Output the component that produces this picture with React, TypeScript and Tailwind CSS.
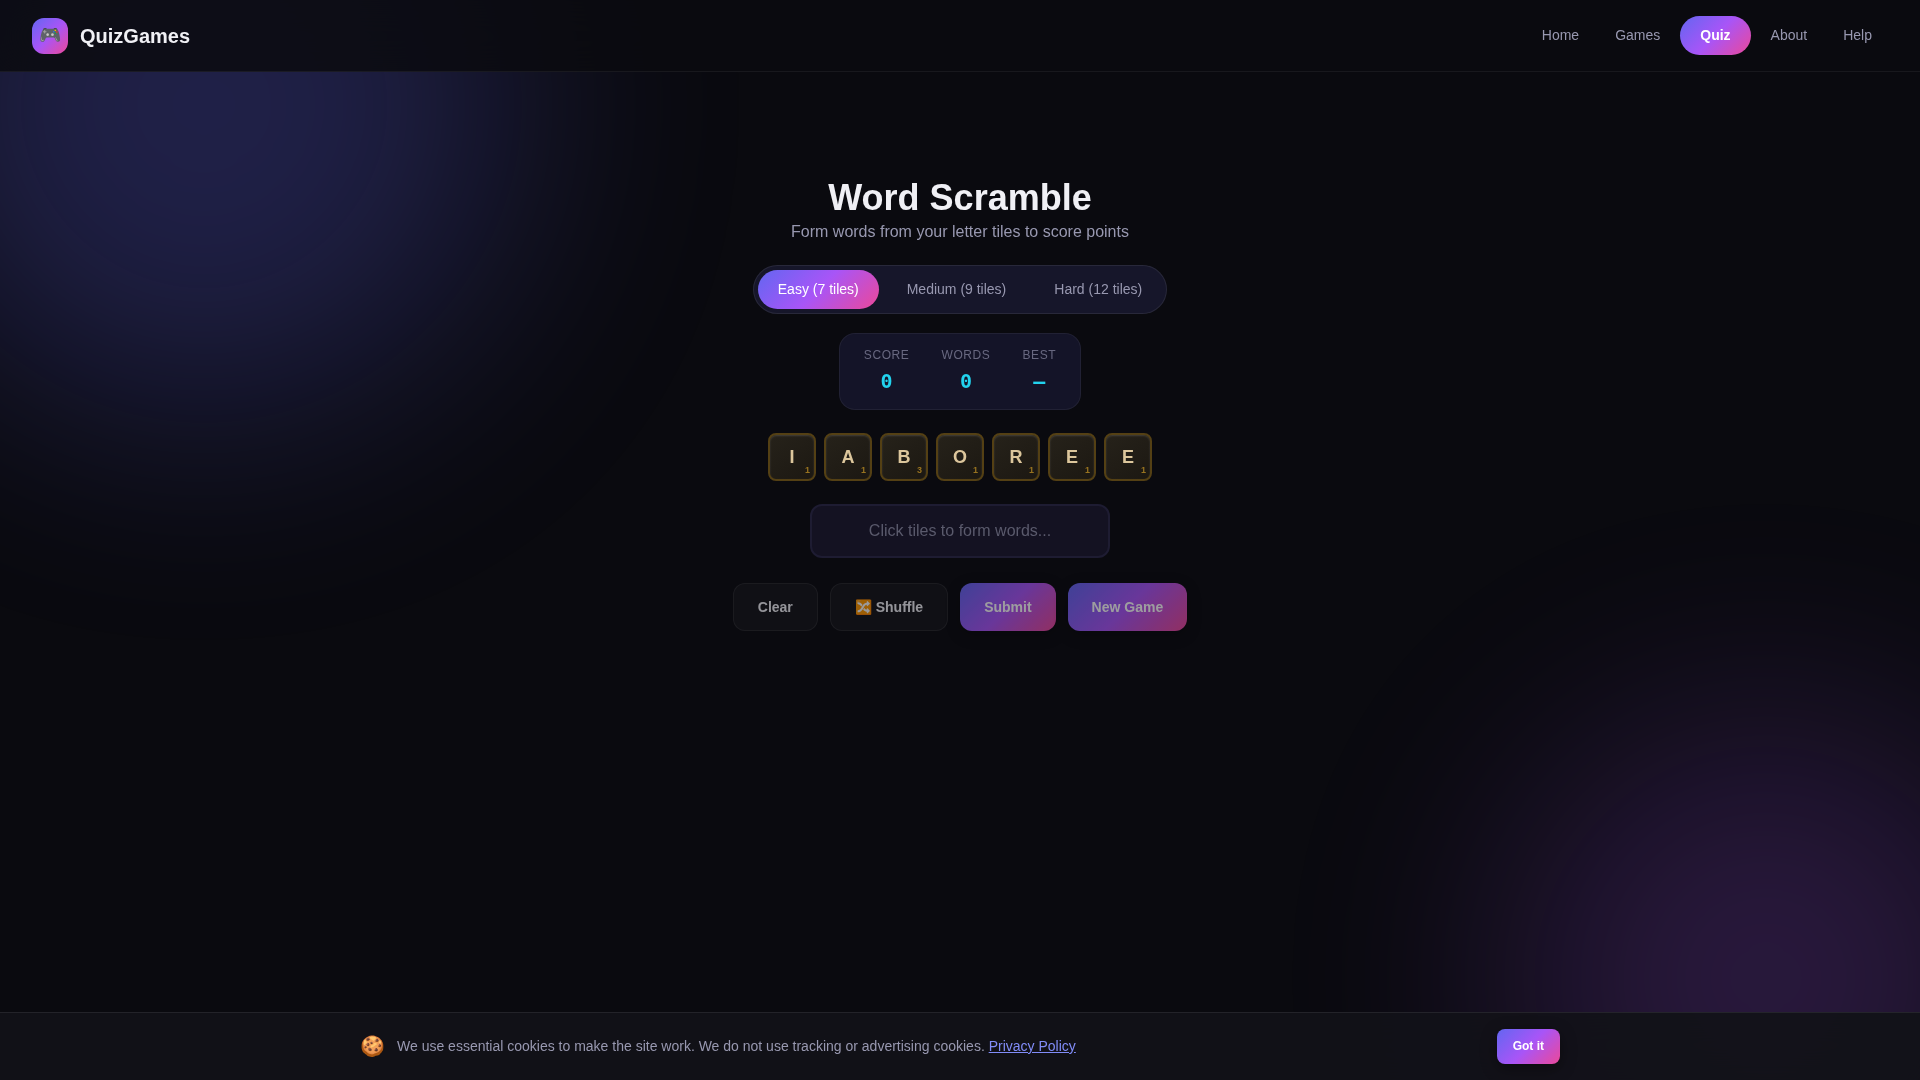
import { useState } from 'react';

const navLinks = ['Home', 'Games', 'Quiz', 'About', 'Help'];
const levels = ['Easy (7 tiles)', 'Medium (9 tiles)', 'Hard (12 tiles)'];

const stats = [
  { label: 'Score', value: '0' },
  { label: 'Words', value: '0' },
  { label: 'Best', value: '—' },
];

const tiles = [
  { letter: 'I', points: 1 },
  { letter: 'A', points: 1 },
  { letter: 'B', points: 3 },
  { letter: 'O', points: 1 },
  { letter: 'R', points: 1 },
  { letter: 'E', points: 1 },
  { letter: 'E', points: 1 },
];

const brand = 'bg-[linear-gradient(135deg,#6366f1_0%,#a855f7_50%,#ec4899_100%)]';

function Glow() {
  return (
    <div aria-hidden="true" className="pointer-events-none fixed inset-0 overflow-hidden">
      <div className="absolute top-[-205px] left-[-106px] size-[620px] rounded-full bg-[#6366f1] opacity-25 blur-[120px]" />
      <div className="absolute right-[-106px] bottom-[-158px] size-[520px] rounded-full bg-[#a855f7] opacity-20 blur-[120px]" />
    </div>
  );
}

function Header() {
  return (
    <header className="sticky top-0 z-20 flex h-[72px] items-center justify-between border-b border-white/6 bg-[#0a0a0f]/85 px-8 backdrop-blur-[20px]">
      <a href="#" className="flex items-center gap-3 text-xl font-bold text-[#f0f0f5]">
        <span className={`flex size-9 items-center justify-center rounded-xl text-[18px] ${brand}`}>🎮</span>
        QuizGames
      </a>
      <nav className="flex items-center gap-1 pb-px">
        {navLinks.map((link) => (
          <a
            key={link}
            href="#"
            className={`rounded-full py-2 text-sm leading-[23px] ${
              link === 'Quiz' ? `px-5 font-bold text-white ${brand}` : 'px-4 text-[#9898b0]'
            }`}
          >
            {link}
          </a>
        ))}
      </nav>
    </header>
  );
}

function CookieBar() {
  return (
    <div className="fixed inset-x-0 bottom-0 z-20 border-t border-white/8 bg-[#121218]/95 px-8 py-4 backdrop-blur-[20px]">
      <div className="mx-auto flex max-w-[1200px] items-center justify-between">
        <div className="flex items-center gap-3">
          <span className="text-xl leading-[21px]">🍪</span>
          <p className="text-sm leading-[21px] text-[#9898b0]">
            We use essential cookies to make the site work. We do not use tracking or advertising cookies.{' '}
            <a href="#" className="text-[#818cf8] underline">Privacy Policy</a>
          </p>
        </div>
        <button type="button" className={`rounded-lg px-4 py-2 text-xs leading-[19px] font-bold text-white shadow-[0_4px_16px_rgba(0,0,0,0.4)] ${brand}`}>
          Got it
        </button>
      </div>
    </div>
  );
}

export default function App() {
  const [level, setLevel] = useState(levels[0]);

  return (
    <div className="min-h-screen bg-[#0a0a0f] font-['Liberation_Sans',sans-serif] text-[#f0f0f5]">
      <Glow />
      <Header />
      <main className="relative flex flex-col items-center px-4 pt-[104px]">
        <h1 className="text-4xl leading-[43px] font-bold">Word Scramble</h1>
        <p className="text-base leading-[26px] text-[#9898b0]">Form words from your letter tiles to score points</p>

        <div className="mt-5 flex gap-2 rounded-full border border-white/8 bg-[#16162a] p-1">
          {levels.map((item) => (
            <button
              key={item}
              type="button"
              onClick={() => setLevel(item)}
              className={`rounded-full px-5 py-2 text-sm leading-[23px] ${
                item === level ? `text-white ${brand}` : 'text-[#9898b0]'
              }`}
            >
              {item}
            </button>
          ))}
        </div>

        <dl className="mt-[19px] flex gap-8 rounded-2xl border border-white/6 bg-[#141428] px-6 py-3">
          {stats.map((stat) => (
            <div key={stat.label} className="text-center">
              <dt className="text-xs leading-[19px] tracking-wider text-[#686880] uppercase">{stat.label}</dt>
              <dd className="font-['DejaVu_Sans_Mono',monospace] text-xl leading-8 font-bold text-[#22d3ee]">{stat.value}</dd>
            </div>
          ))}
        </dl>

        <div className="mt-[23px] flex gap-2">
          {tiles.map((tile, i) => (
            <button
              key={i}
              type="button"
              className="relative size-12 rounded-lg border-2 border-[#544014] bg-[linear-gradient(145deg,#26221a,#1c1812)] text-lg font-bold text-[#dcc69c] shadow-[inset_0_1px_2px_rgba(255,255,255,0.15)]"
            >
              {tile.letter}
              <span className="absolute right-1 bottom-0.5 text-[9px] leading-[14px] font-bold text-[#987320]">{tile.points}</span>
            </button>
          ))}
        </div>

        <input
          type="text"
          readOnly
          aria-label="Current word"
          placeholder="Click tiles to form words..."
          className="mt-[23px] h-[54px] w-[300px] rounded-xl border-2 border-[#1e1c32] bg-[#141222] text-center text-base placeholder:text-[#5a5a6c]"
        />

        <div className="mt-[25px] flex gap-3 text-sm leading-[22px] font-bold">
          <button type="button" className="rounded-xl border border-white/8 bg-white/5 px-6 py-3 opacity-60">Clear</button>
          <button type="button" className="rounded-xl border border-white/8 bg-white/5 px-6 py-3 opacity-60">🔀 Shuffle</button>
          <button type="button" className={`rounded-xl px-6 py-[13px] text-white opacity-60 shadow-[0_4px_16px_rgba(0,0,0,0.4)] ${brand}`}>Submit</button>
          <button type="button" className={`rounded-xl px-6 py-[13px] text-white opacity-60 shadow-[0_4px_16px_rgba(0,0,0,0.4)] ${brand}`}>New Game</button>
        </div>
      </main>
      <CookieBar />
    </div>
  );
}
